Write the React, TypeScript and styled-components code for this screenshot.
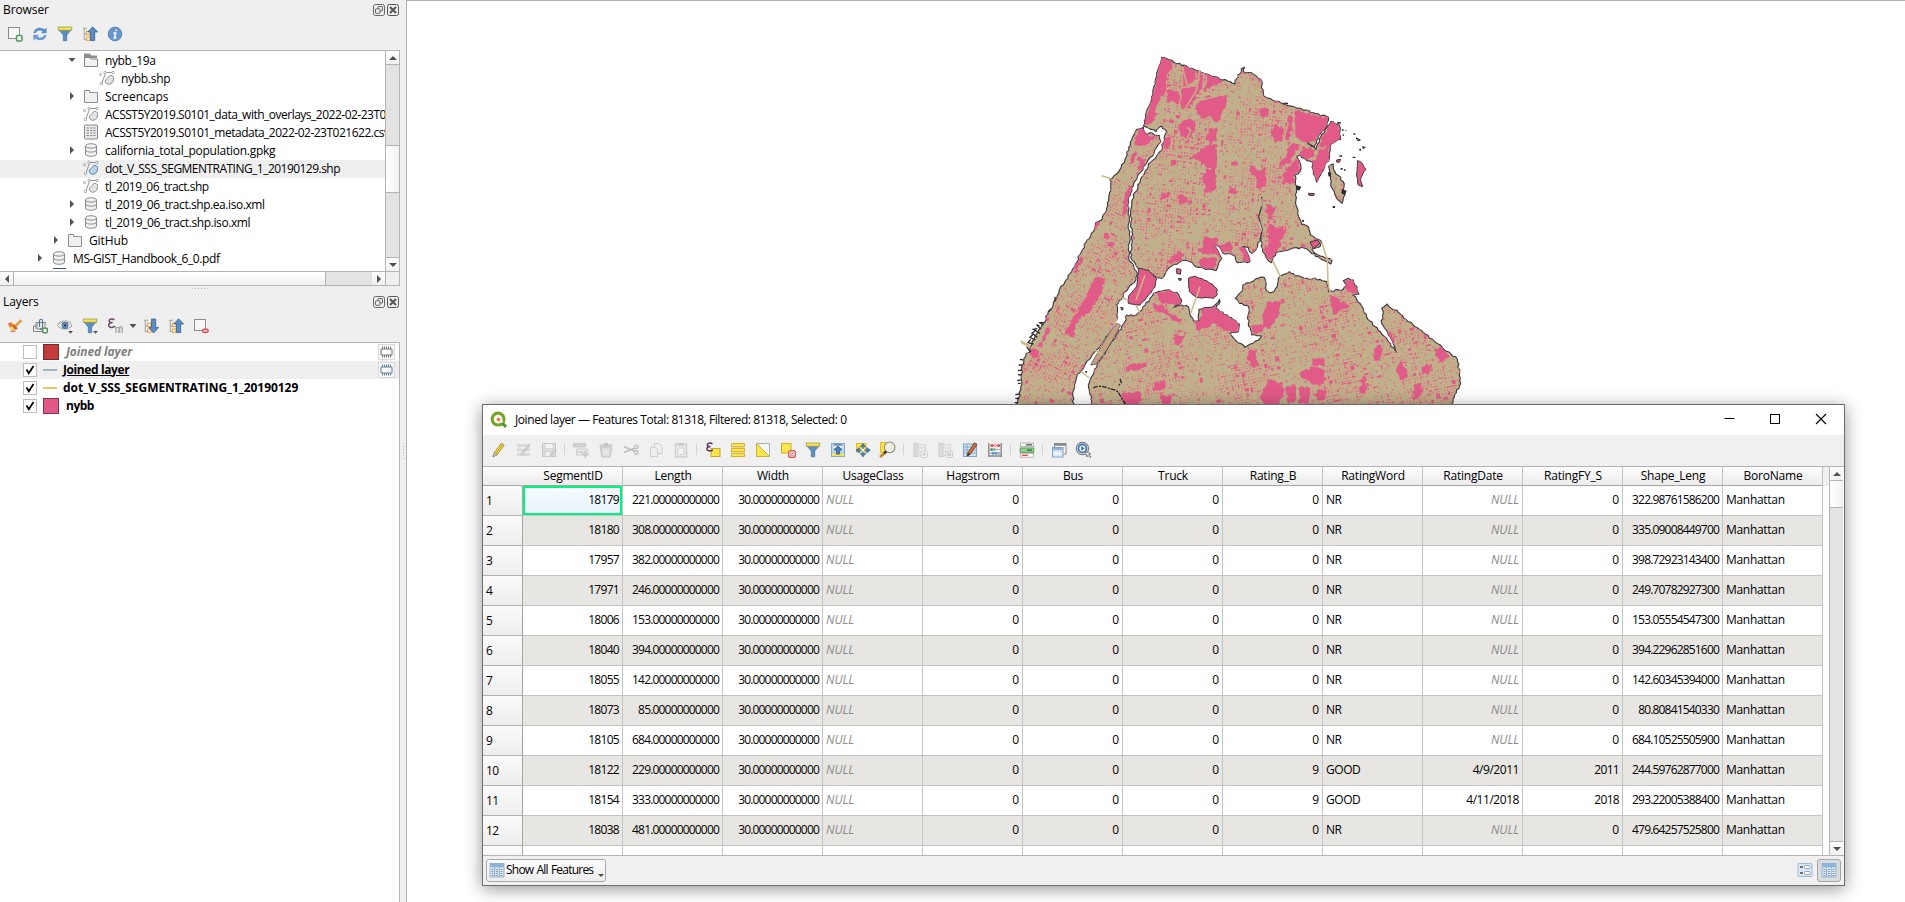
import React from "react";
import styled, { createGlobalStyle, css } from "styled-components";

const Global = createGlobalStyle`
  html, body { margin: 0; padding: 0; height: 902px; overflow: hidden; }
  body { background: #f0f0f0; font-family: "Open Sans", "Noto Sans", sans-serif; font-size: 12px; color: #000; }
  * { box-sizing: border-box; }
  svg { display: block; flex: none; }
`;

/* ---------- shell ---------- */
const Shell = styled.div`
  display: flex;
  width: 1905px;
  height: 902px;
  position: relative;
  overflow: hidden;
  background: #efefef;
`;
const Side = styled.div`
  width: 400px;
  display: flex;
  flex-direction: column;
`;
const Splitter = styled.div`
  width: 6px;
  height: 902px;
  display: flex;
  align-items: center;
  justify-content: center;
`;
const Canvas = styled.div`
  flex: 1;
  border-left: 1px solid #b0b0b0;
  border-top: 1px solid #b0b0b0;
  background: #fff;
  padding: 39px 0 0 593px;
`;
const Dots = styled.div<{ $vertical?: boolean }>`
  ${(p) =>
    p.$vertical
      ? css`width: 1px; height: 17px; background: repeating-linear-gradient(#bbb 0 1px, transparent 1px 3px);`
      : css`height: 1px; width: 17px; background: repeating-linear-gradient(90deg, #bbb 0 1px, transparent 1px 3px);`}
`;
const HSplit = styled.div`
  height: 7px;
  display: flex;
  justify-content: center;
  padding-top: 2px;
`;
const PanelHead = styled.div<{ $h: number }>`
  height: ${(p) => p.$h}px;
  display: flex;
  align-items: center;
  padding: 0 1px 1px 3px;
  letter-spacing: -0.1px;
  svg { margin-left: 2px; }
`;
const Grow = styled.div`
  flex: 1;
`;
const ToolRow = styled.div<{ $h: number; $left: number }>`
  height: ${(p) => p.$h}px;
  padding-left: ${(p) => p.$left}px;
  padding-bottom: 2px;
  display: flex;
  align-items: center;
`;
const Tool = styled.div<{ $w?: number; $off?: boolean }>`
  width: ${(p) => p.$w ?? 25}px;
  display: flex;
  justify-content: center;
  flex: none;
  opacity: ${(p) => (p.$off ? 0.32 : 1)};
  filter: ${(p) => (p.$off ? "grayscale(0.8)" : "none")};
`;
const Sep = styled.div`
  width: 1px;
  height: 11px;
  margin: 0 3px;
  background: #d2d2d2;
  flex: none;
`;

/* ---------- browser tree ---------- */
const TreeBox = styled.div`
  height: 236px;
  width: 400px;
  border-top: 1px solid #b4b4b4;
  border-right: 1px solid #b4b4b4;
  border-bottom: 1px solid #b4b4b4;
  background: #fff;
  display: flex;
  flex-direction: column;
`;
const TreeMid = styled.div`
  display: flex;
  height: 220px;
`;
const TreeRows = styled.div`
  width: 385px;
  padding-top: 1px;
  overflow: hidden;
`;
const TreeRow = styled.div<{ $indent: number; $sel?: boolean }>`
  height: 18px;
  padding-left: ${(p) => p.$indent}px;
  padding-bottom: 2px;
  display: flex;
  align-items: center;
  white-space: nowrap;
  background: ${(p) => (p.$sel ? "#efefef" : "transparent")};
`;
const Twist = styled.div`
  width: 20px;
  padding-left: 5px;
  flex: none;
`;
const TreeName = styled.span<{ $ls: number }>`
  margin-left: 6px;
  letter-spacing: ${(p) => p.$ls}px;
`;
const VBar = styled.div`
  width: 14px;
  border-left: 1px solid #b4b4b4;
  background: #e3e3e3;
  display: flex;
  flex-direction: column;
  flex: none;
`;
const Btn = styled.div<{ $w?: number; $h?: number }>`
  width: ${(p) => (p.$w ? p.$w + "px" : "auto")};
  height: ${(p) => (p.$h ? p.$h + "px" : "auto")};
  display: flex;
  align-items: center;
  justify-content: center;
  background: linear-gradient(#fdfdfd, #f0f0f0);
  flex: none;
`;
const VThumb = styled.div<{ $top: number; $h: number }>`
  margin-top: ${(p) => p.$top}px;
  height: ${(p) => p.$h}px;
  border-top: 1px solid #b4b4b4;
  border-bottom: 1px solid #b4b4b4;
  background: linear-gradient(90deg, #fff, #f2f2f2);
`;
const BarLine = styled.div`
  height: 1px;
  background: #b4b4b4;
`;
const HBar = styled.div`
  height: 14px;
  border-top: 1px solid #b4b4b4;
  display: flex;
  background: #e3e3e3;
`;
const HThumb = styled.div`
  width: 313px;
  border-left: 1px solid #b4b4b4;
  border-right: 1px solid #b4b4b4;
  background: linear-gradient(#fff, #f0f0f0);
`;
const Corner = styled.div`
  width: 14px;
  background: #efefef;
  border-left: 1px solid #b4b4b4;
`;
const Peek = styled.div`
  width: 13px;
  height: 1px;
  margin-left: 53px;
  background: #3d5578;
`;

/* ---------- layers ---------- */
const LayerBox = styled.div`
  flex: 1;
  border-top: 1px solid #b4b4b4;
  border-right: 1px solid #b4b4b4;
  background: #fff;
`;
const LayerRow = styled.div<{ $sel?: boolean }>`
  height: 18px;
  padding: 0 4px 0 23px;
  display: flex;
  align-items: center;
  background: ${(p) => (p.$sel ? "#efefef" : "transparent")};
  font-weight: 700;
`;
const Check = styled.div`
  width: 14px;
  height: 14px;
  border: 1px solid #bdbdbd;
  background: #fff;
  margin-right: 6px;
`;
const Swatch = styled.div<{ $c: string; $line?: boolean }>`
  width: ${(p) => (p.$line ? 14 : 16)}px;
  height: ${(p) => (p.$line ? 2 : 16)}px;
  background: ${(p) => p.$c};
  border: ${(p) => (p.$line ? "none" : "1px solid rgba(60,30,40,.6)")};
  margin-right: ${(p) => (p.$line ? 6 : 7)}px;
`;
const LayerName = styled.span<{ $off?: boolean; $u?: boolean; $ls: number }>`
  flex: 1;
  padding-bottom: 2px;
  letter-spacing: ${(p) => p.$ls}px;
  color: ${(p) => (p.$off ? "#7f7f7f" : "#000")};
  font-style: ${(p) => (p.$off ? "italic" : "normal")};
  text-decoration: ${(p) => (p.$u ? "underline" : "none")};
`;
const MemBox = styled.div`
  width: 17px;
  height: 16px;
  border: 1px solid #dadada;
  background: #f7f7f7;
  display: flex;
  align-items: center;
  justify-content: center;
`;

/* ---------- attribute table window ---------- */
const Win = styled.div`
  position: absolute;
  left: 482px;
  top: 404px;
  width: 1363px;
  height: 482px;
  border: 1px solid #6e6e6e;
  background: #f0f0f0;
  box-shadow: 0 3px 16px rgba(0, 0, 0, 0.42);
  display: flex;
  flex-direction: column;
`;
const TitleBar = styled.div`
  height: 30px;
  background: #fff;
  display: flex;
  align-items: center;
  padding: 0 17px 2px 7px;
`;
const TitleText = styled.div`
  margin-left: 8px;
  flex: 1;
  letter-spacing: -0.42px;
`;
const WinBtns = styled.div`
  display: flex;
  gap: 34px;
`;
const GridBox = styled.div`
  display: flex;
  height: 390px;
  border-top: 1px solid #b4b4b4;
  border-bottom: 1px solid #b4b4b4;
  background: #fff;
`;
const Table = styled.div`
  display: grid;
  grid-template-columns: 40px repeat(13, 100px);
  grid-template-rows: 19px repeat(13, 30px);
  width: 1340px;
  overflow: hidden;
`;
const HeadCell = styled.div<{ $first?: boolean }>`
  border-right: 1px solid ${(p) => (p.$first ? "transparent" : "#c4c4c4")};
  border-bottom: 1px solid #a6a6a6;
  background: linear-gradient(#fdfdfd, #ececec);
  text-align: center;
  line-height: 18px;
  padding-left: 1px;
  letter-spacing: -0.22px;
`;
const RowHead = styled.div`
  border-right: 1px solid #a6a6a6;
  border-bottom: 1px solid #b0b0b0;
  background: linear-gradient(#fbfbfb, #ededed);
  padding-left: 3px;
  line-height: 29px;
  letter-spacing: -0.5px;
`;
const Cell = styled.div<{ $alt?: boolean; $left?: boolean; $nul?: boolean; $cur?: boolean; $ls?: number }>`
  border-right: 1px solid #c4c4c4;
  border-bottom: 1px solid #c4c4c4;
  background: ${(p) => (p.$alt ? "#e8e6e2" : "#fff")};
  text-align: ${(p) => (p.$left ? "left" : "right")};
  padding: 0 3px;
  line-height: 27px;
  white-space: nowrap;
  color: ${(p) => (p.$nul ? "#8a8a8a" : "#000")};
  font-style: ${(p) => (p.$nul ? "italic" : "normal")};
  letter-spacing: ${(p) => p.$ls ?? 0}px;
  ${(p) =>
    p.$cur &&
    css`
      background: linear-gradient(#f5fafe, #e9f3fc);
      box-shadow: inset 0 0 0 2px #00f57f;
    `}
`;
const Filler = styled.div`
  width: 6px;
  height: 19px;
  background: #f0f0f0;
`;
const Footer = styled.div`
  flex: 1;
  display: flex;
  align-items: center;
  justify-content: space-between;
  padding: 0 3px 1px;
`;
const ShowAll = styled.div`
  width: 120px;
  height: 23px;
  border: 1px solid #a9a9a9;
  border-radius: 3px;
  background: linear-gradient(#fdfdfd, #ededed);
  display: flex;
  align-items: center;
  padding-left: 2px;
`;
const ShowText = styled.span`
  margin-left: 1px;
  width: 90px;
  padding-bottom: 1px;
  white-space: nowrap;
  letter-spacing: -0.78px;
  word-spacing: 0.8px;
`;
const Caret = styled.div`
  align-self: flex-end;
  padding-bottom: 3px;
  margin-left: 2px;
`;
const FootRight = styled.div`
  display: flex;
  align-items: center;
  gap: 4px;
`;
const Pressed = styled.div`
  width: 24px;
  height: 23px;
  border: 1px solid #a4a4a4;
  border-radius: 3px;
  background: #dcdcdc;
  display: flex;
  align-items: center;
  justify-content: center;
`;

/* ---------- icons ---------- */
const I = ({ children, s = 16 }: { children: React.ReactNode; s?: number }) => (
  <svg width={s} height={s} viewBox="0 0 16 16" fill="none">
    {children}
  </svg>
);
const Arrow = ({ d }: { d: "u" | "d" | "l" | "r" | "o" }) => {
  const path = {
    u: "M0 6L4 2L8 6Z",
    d: "M0 2L4 6L8 2Z",
    l: "M6 0L2 4L6 8Z",
    r: "M2 0L6 4L2 8Z",
    o: "M0.5 2L4 6L7.5 2Z",
  }[d];
  return (
    <svg width="8" height="8" viewBox="0 0 8 8">
      <path d={path} fill="#505050" />
    </svg>
  );
};
const FloatIcon = () => (
  <svg width="12" height="12" viewBox="0 0 12 12" fill="none" stroke="#666">
    <rect x="0.5" y="0.5" width="11" height="11" rx="2" />
    <rect x="5" y="2.5" width="4.5" height="4.5" rx=".5" />
    <rect x="2.5" y="4.8" width="4.5" height="4.5" rx=".5" fill="#efefef" />
  </svg>
);
const CloseIcon = () => (
  <svg width="12" height="12" viewBox="0 0 12 12" fill="none" stroke="#555">
    <rect x="0.5" y="0.5" width="11" height="11" rx="2" />
    <path d="M3 3L9 9M9 3L3 9" strokeWidth="2" />
  </svg>
);
const AddLayer = () => (
  <I>
    <rect x="1.5" y="1.5" width="11" height="11" stroke="#8c8c8c" fill="#f6f6f6" />
    <rect x="9.5" y="9.5" width="5.5" height="5.5" rx="1.5" fill="#fff" stroke="#4f9658" strokeWidth="1.6" />
  </I>
);
const Refresh = () => (
  <I>
    <path d="M1.5 7C2 3.5 5 1.8 8 1.8C10 1.8 11.3 2.6 12.3 3.5L14.6 1.5V7.3H8.8L10.6 5.4C9.8 4.7 8.9 4.4 7.8 4.5C5.5 4.6 4.4 5.7 3.8 7Z" fill="#5b8fc7" />
    <path d="M14.5 9C14 12.5 11 14.2 8 14.2C6 14.2 4.7 13.4 3.7 12.5L1.4 14.5V8.7H7.2L5.4 10.6C6.2 11.3 7.1 11.6 8.2 11.5C10.5 11.4 11.6 10.3 12.2 9Z" fill="#6b9bd0" />
  </I>
);
const Funnel = ({ caret }: { caret?: boolean }) => (
  <I>
    <path d="M1.5 3.5L6.3 9V14.8H9.7V9L14.5 3.5Z" fill="#5e8fc3" stroke="#44709f" strokeWidth=".7" />
    <rect x="1.2" y="1" width="13.6" height="3.2" fill="#fbe04a" stroke="#8b9a52" strokeWidth=".7" />
    {caret && <path d="M11 13H16L13.5 15.8Z" fill="#505050" />}
  </I>
);
const TreeArrow = ({ down }: { down?: boolean }) => (
  <I>
    <path d="M1 2.2H5M2.3 2V13.5H5M2.3 8H5" stroke="#a5a5a5" strokeWidth="1.1" />
    <rect x="4.6" y="5.3" width="3.3" height="3.3" stroke="#f09a28" fill="#fff" />
    <rect x="4.6" y="11" width="3.3" height="3.3" stroke="#f09a28" fill="#fff" />
    {down ? (
      <path d="M8.5 1H12.7V9.5H15.6L10.6 15L5.8 9.5H8.5Z" fill="#5b8cc2" stroke="#355f90" strokeWidth=".8" />
    ) : (
      <path d="M8.5 14.6H12.7V6H15.6L10.6 .8L5.8 6H8.5Z" fill="#5b8cc2" stroke="#355f90" strokeWidth=".8" />
    )}
  </I>
);
const Info = () => (
  <I>
    <circle cx="8" cy="8" r="6.8" fill="#6a97cb" stroke="#5380b4" />
    <path d="M8.3 4.3H10M6.4 7H8.7L7.4 12H9.4" stroke="#fff" strokeWidth="1.5" />
  </I>
);
const FolderIcon = ({ open }: { open?: boolean }) => (
  <I>
    {open ? (
      <>
        <path d="M1 6V1.5H6.5L8.5 3.5H14V6Z" fill="#8f8f8f" />
        <path d="M1.5 5.5H6.5L8 7H14.5V14.5H1.5Z" fill="#f2f2f2" stroke="#858585" />
      </>
    ) : (
      <path d="M1.5 2.5H6.5V4.5H14.5V14.5H1.5Z" fill="#f0f0f0" stroke="#8f8f8f" />
    )}
  </I>
);
const VectorIcon = ({ blue }: { blue?: boolean }) => (
  <I>
    <path d="M2.8 13.5L6.2 4M6 2.5H14" stroke="#8f9499" />
    <circle cx="1.6" cy="4.6" r="1.1" stroke="#8f9499" strokeWidth=".8" />
    <circle cx="6" cy="2.3" r="1.2" stroke="#8f9499" strokeWidth=".8" fill="#fff" />
    <circle cx="14" cy="2.5" r="1.2" stroke="#8f9499" strokeWidth=".8" fill="#fff" />
    <circle cx="2.4" cy="13.6" r="1.2" stroke="#8f9499" strokeWidth=".8" fill="#fff" />
    <path d="M6.5 12C5.5 9.5 9 8.5 10 6.5C11 4.5 14.8 5.2 14.6 8.5C14.4 12.5 12 14.4 9.6 14.2C8 14 7 13.4 6.5 12Z" fill={blue ? "#b9d3e8" : "#e3e3e3"} stroke={blue ? "#4f7ba3" : "#868686"} />
  </I>
);
const SheetIcon = () => (
  <I>
    <rect x="1.5" y="1" width="13" height="14" rx="1" fill="#e9e9e9" stroke="#8a8a8a" />
    <path d="M3.5 4H6M7.2 4H9.4M10.4 4H12.6M3.5 6.5H6M7.2 6.5H9.4M10.4 6.5H12.6M3.5 9H6M7.2 9H9.4M10.4 9H12.6M3.5 11.5H6M7.2 11.5H9.4M10.4 11.5H12.6" stroke="#8a8a8a" strokeWidth="1.1" />
  </I>
);
const DbIcon = () => (
  <I>
    <path d="M2.5 4C2.5 1 13.5 1 13.5 4V12C13.5 15 2.5 15 2.5 12Z" fill="#f2f2f2" stroke="#8c8c8c" />
    <path d="M2.5 4C2.5 6.8 13.5 6.8 13.5 4M2.5 8C2.5 10.8 13.5 10.8 13.5 8" stroke="#8c8c8c" />
  </I>
);
const BrushIcon = () => (
  <I>
    <path d="M1 6L5 4L9 8L7.5 12.5L4 12Z" fill="#f3d34c" />
    <path d="M1 5.5L4 4.3L5.5 7.5L3 9.5Z" fill="#e36b4c" />
    <path d="M3 13L7.5 12L9 13.5L4.5 14.5Z" fill="#de8a70" />
    <path d="M4.6 7.6L8.6 12L10.8 10.2L6.8 5.9Z" fill="#cf5a30" />
    <path d="M8.2 8.2L14.5 2.2" stroke="#dd9a3c" strokeWidth="2.4" />
  </I>
);
const GroupIcon = () => (
  <I>
    <path d="M1.5 13.5H10M1.5 13.5V8H4M4 11V4.5H6.5M12.5 9V4.5H14" stroke="#888" />
    <path d="M5 4.5H13V11H5Z" stroke="#888" fill="#eee" />
    <path d="M7.5 9V3C7.5 .7 10.5 .7 10.5 3V10C10.5 12 8.5 12 8.5 10" stroke="#4b7298" strokeWidth="1.1" />
    <rect x="10.7" y="10.2" width="4.6" height="4.6" rx="1" fill="#fff" stroke="#4f9658" strokeWidth="1.6" />
  </I>
);
const EyeIcon = () => (
  <I>
    <path d="M.5 7.5C3.5 3 12 2.5 15 8C11 12 4 12 .5 7.5Z" fill="#f5f5f5" stroke="#999" />
    <path d="M1 5.5C4 2 11 1.5 14.5 5" stroke="#aaa" strokeWidth=".8" />
    <circle cx="8" cy="7.4" r="3.1" fill="#6f97c0" stroke="#4d6f93" />
    <circle cx="8" cy="7.4" r="1.2" fill="#22364d" />
    <path d="M11 13H16L13.5 15.8Z" fill="#505050" />
  </I>
);
const EpsIcon = () => (
  <I>
    <path d="M7.5 1.8C5 0 1.8 1.2 2.2 3.2C2.4 4.6 4.2 4.8 5.6 4.6C3.2 4.6 1.3 5.6 1.7 7.6C2.2 9.8 5.8 10 8 8.2" stroke="#6a4a6c" strokeWidth="1.5" />
    <path d="M8.8 15V9.5H12V15M12.5 15V9.8C12.8 8 15.4 8.4 15.3 10.5V15" stroke="#aaa" strokeWidth="1.2" fill="#e0e0e0" />
  </I>
);
const RemoveIcon = () => (
  <I>
    <rect x="1.5" y="1.5" width="11" height="11" stroke="#8c8c8c" fill="#f6f6f6" />
    <rect x="9" y="10.5" width="6.8" height="4.6" rx="2" fill="#e04848" />
    <path d="M10.5 12.8H14.3" stroke="#fff" strokeWidth="1.3" />
  </I>
);
const ChipIcon = ({ c }: { c: string }) => (
  <svg width="13" height="12" viewBox="0 0 13 12" fill="none" stroke={c}>
    <path d="M2.5 0.5V3M4.5 0.5V3M6.5 0.5V3M8.5 0.5V3M10.5 0.5V3M2.5 9V11.5M4.5 9V11.5M6.5 9V11.5M8.5 9V11.5M10.5 9V11.5" />
    <rect x="1" y="3" width="11" height="6" rx="1" fill="#fff" strokeWidth="1.1" />
  </svg>
);
const Tick = () => (
  <svg width="12" height="12" viewBox="0 0 12 12" fill="none">
    <path d="M2.5 5.5L4.8 9.3L9.5 2" stroke="#000" strokeWidth="1.7" />
  </svg>
);
const QLogo = () => (
  <I s={17}>
    <circle cx="7.6" cy="7.6" r="5.6" stroke="#76a52c" strokeWidth="3" />
    <path d="M8.5 8L15 15" stroke="#5d9130" strokeWidth="3" />
    <path d="M7 6.8L11 7L12.5 10.5L10 11.5L7 9.5Z" fill="#f0f0e0" />
    <circle cx="7.9" cy="7.9" r="1.7" fill="#ef7a30" />
  </I>
);
const Pencil = () => (
  <I>
    <path d="M2 14.8L3.4 10.5L10.4 1.2L13.2 3.2L6.3 12.6Z" fill="#f0d446" stroke="#9a8a3a" strokeWidth=".8" />
    <path d="M2 14.8L3.4 10.5L6.3 12.6Z" fill="#d8d8c8" stroke="#777" strokeWidth=".7" />
    <path d="M4.8 11.5L11.8 2.2" stroke="#b89f2e" strokeWidth=".8" />
  </I>
);
const MultiEdit = () => (
  <I>
    <path d="M1 3.5H14M1 8H14M1 12.5H14" stroke="#a8b090" strokeWidth="3" />
    <path d="M5 13L13.5 2.5" stroke="#777" strokeWidth="2.6" />
  </I>
);
const Save = () => (
  <I>
    <path d="M1.5 2.5C1.5 1.5 2 1.5 3 1.5H14.5V14.5H1.5Z" fill="#bbb" stroke="#666" />
    <rect x="4" y="1.8" width="8" height="5" fill="#fff" stroke="#777" strokeWidth=".7" />
    <rect x="4" y="9.5" width="7" height="5" fill="#eee" stroke="#777" strokeWidth=".7" />
    <path d="M9 14L15 7" stroke="#777" strokeWidth="2" />
  </I>
);
const AddRow = () => (
  <I>
    <path d="M.5 1.5H12.5V5H.5Z" fill="#999" stroke="#777" />
    <path d="M3.5 7H14.5V10H3.5ZM3.5 10H10V13H3.5Z" fill="#ddd" stroke="#888" />
    <path d="M12.5 9V16M9 12.5H16" stroke="#777" strokeWidth="2" />
  </I>
);
const Trash = () => (
  <I>
    <path d="M2.5 5H13.5L12.5 15H3.5Z" fill="#c99" stroke="#866" />
    <path d="M1.5 3.5H14.5M6 2H10" stroke="#866" strokeWidth="1.8" />
    <path d="M6 6.5V13.5M8 6.5V13.5M10 6.5V13.5" stroke="#fff" />
  </I>
);
const Cut = () => (
  <I>
    <path d="M1 4.5L12 9.5M1 10.5L12 6" stroke="#555" strokeWidth="1.4" />
    <circle cx="13.3" cy="5" r="1.8" stroke="#555" strokeWidth="1.3" />
    <circle cx="13.3" cy="10.5" r="1.8" stroke="#555" strokeWidth="1.3" />
  </I>
);
const Copy = () => (
  <I>
    <path d="M6.5 1.5H11L14 4.5V11.5H6.5Z" fill="#eee" stroke="#888" />
    <path d="M2.5 5H7L9.5 7.5V14.5H2.5Z" fill="#eee" stroke="#888" />
  </I>
);
const Paste = () => (
  <I>
    <rect x="2.5" y="2" width="11" height="13" fill="#ddd" stroke="#888" strokeWidth="1.4" />
    <rect x="5.5" y=".8" width="5" height="3" fill="#777" />
    <path d="M5 6H11V12.5H5Z" fill="#fff" stroke="#999" />
  </I>
);
const SelExpr = () => (
  <I>
    <rect x="6" y="6.5" width="9" height="8" fill="#fbe64d" stroke="#c9a92a" />
    <path d="M7.5 1.8C5 .2 2 1.2 2.4 3C2.6 4.4 4 4.8 5.4 4.6C3.2 4.6 1.6 5.4 2 7.2C2.5 9.2 5.8 9.4 7.8 7.8" stroke="#54305a" strokeWidth="1.5" />
  </I>
);
const SelAll = () => (
  <I>
    <path d="M1.5 1.5H14.5V4.8H1.5ZM1.5 6.4H14.5V9.7H1.5ZM1.5 11.3H14.5V14.6H1.5Z" fill="#fbe64d" stroke="#d0ae2c" />
  </I>
);
const Invert = () => (
  <I>
    <rect x="1.5" y="1.5" width="13" height="13" fill="#f5f5f5" stroke="#b0b0b0" />
    <path d="M1.5 1.5V14.5H14.5Z" fill="#fbe64d" stroke="#cdb033" />
  </I>
);
const Desel = () => (
  <I>
    <rect x="1.5" y="1.5" width="9.5" height="9.5" fill="#fbe64d" stroke="#d0ae2c" />
    <rect x="8.6" y="8.6" width="6.8" height="6.8" rx="2" fill="#fff" stroke="#d9534f" strokeWidth="1.2" />
    <path d="M9.5 14.5L14.5 9.5M9.5 12L12 9.5M12 14.5L14.5 12" stroke="#d9534f" strokeWidth="1" />
  </I>
);
const MoveTop = () => (
  <I>
    <rect x="1.5" y="1.5" width="13" height="13" fill="#b9d3ea" stroke="#86a9c9" />
    <path d="M2 12.8H14" stroke="#f5e25a" strokeWidth="2.6" />
    <path d="M3 5H13M3 8H13" stroke="#fff" />
    <path d="M4 2.8H12M8 4L12 8H9.6V12H6.4V8H4Z" fill="#4f7fb5" stroke="#345f90" strokeWidth=".9" />
  </I>
);
const Pan = () => (
  <I>
    <rect x="1.5" y="1.5" width="9.5" height="8.5" fill="#fbe64d" stroke="#d6ba3c" />
    <path d="M8 1.5L10.5 4.8H5.5ZM8 14.8L10.5 11.5H5.5ZM1 8.2L4.3 5.7V10.7ZM15.2 8.2L11.8 5.7V10.7Z" fill="#4e7eb4" stroke="#3a6498" strokeWidth=".8" />
    <path d="M8 4.5V12M4 8.2H12" stroke="#4e7eb4" strokeWidth="1.5" />
    <rect x="6.7" y="6.9" width="2.6" height="2.6" fill="#fff" />
  </I>
);
const ZoomSel = () => (
  <I s={17}>
    <rect x="1.5" y="1.5" width="9" height="9" fill="#fbe64d" stroke="#d6ba3c" />
    <path d="M1 15L6.5 10.2" stroke="#ba8b20" strokeWidth="2.6" />
    <circle cx="10" cy="6" r="5" fill="#f1efe4" stroke="#8a8878" />
    <path d="M4.8 11.5L6.8 9.8" stroke="#222" strokeWidth="1.8" />
  </I>
);
const NewCol = ({ del }: { del?: boolean }) => (
  <I>
    <path d="M2 1.5H6.5V14.5H2Z" fill="#aab49a" stroke="#888" />
    <path d="M6.5 2.5H13.5V13.5H6.5ZM6.5 6H13.5M6.5 9.5H13.5" stroke="#aaa" fill="#e6e6e6" />
    <rect x="9" y="9" width="6.5" height="6.5" rx="1.5" fill="#fff" stroke={del ? "#a66" : "#888"} />
    <path d={del ? "M10.5 10.5L14 14M14 10.5L10.5 14" : "M12.2 10.3V14M10.4 12.2H14"} stroke={del ? "#a66" : "#777"} strokeWidth="1.3" />
  </I>
);
const EditTable = () => (
  <I>
    <rect x="1.5" y="2" width="13" height="12.5" fill="#cfe0f0" stroke="#7fa5c9" />
    <path d="M2 5H14M2 8H14M2 11H14M5 2V14" stroke="#7fa5c9" strokeWidth=".9" />
    <path d="M5.2 14L6 10.8L12.3 .8L15 2.4L8.4 12.2Z" fill="#d9703c" stroke="#6f4128" strokeWidth=".9" />
    <path d="M5.2 14L6 10.8L8.4 12.2Z" fill="#3a2a20" />
  </I>
);
const Abacus = () => (
  <I>
    <path d="M1.8 1V15M14.2 1V15M1 14H15" stroke="#8a8a8a" strokeWidth="1.4" />
    <path d="M2 3.5H14M2 7.5H14M2 11.2H14" stroke="#aaa" />
    <circle cx="5" cy="3.4" r="1.5" fill="#d9484e" />
    <circle cx="8.2" cy="3.4" r="1.3" fill="#fff" stroke="#d9484e" strokeWidth=".7" />
    <circle cx="11.6" cy="3.4" r="1.5" fill="#d9484e" />
    <circle cx="4.6" cy="7.5" r="1.5" fill="#56a06a" />
    <circle cx="7.4" cy="7.5" r="1.5" fill="#7fb98e" />
    <circle cx="6" cy="11.2" r="1.5" fill="#5f93c6" />
    <circle cx="9" cy="11.2" r="1.5" fill="#5f93c6" />
    <circle cx="11.8" cy="11.2" r="1.5" fill="#8fb3d6" />
  </I>
);
const CondFmt = () => (
  <I>
    <rect x="1.5" y="1" width="13" height="3.6" fill="#f7f7f7" stroke="#b0b0b0" />
    <path d="M7 2.8H13" stroke="#555" strokeWidth="1.3" />
    <rect x="1.2" y="6" width="13.6" height="4.4" fill="#8fce8f" stroke="#5ea463" />
    <path d="M8 8.2H13" stroke="#2f7a3c" strokeWidth="1.5" />
    <rect x="1.5" y="11.6" width="13" height="3.6" fill="#fff" stroke="#c4b0b0" />
    <path d="M3 13.4H9" stroke="#d9484e" strokeWidth="1.3" />
  </I>
);
const Dock = () => (
  <I>
    <rect x="3.5" y="1.5" width="11.5" height="10.5" fill="#f7f7f7" stroke="#8a8a8a" />
    <path d="M3.5 2.8H15" stroke="#8a8a8a" strokeWidth="2" />
    <rect x="1.5" y="5.5" width="10.5" height="9.5" fill="#cfe0f0" stroke="#7fa5c9" />
    <path d="M1.5 7H12" stroke="#8fb3d6" strokeWidth="2.4" />
    <path d="M2 11.5H11.5M5 8V14.5M8.5 8V14.5" stroke="#fff" />
  </I>
);
const ActionIcon = () => (
  <I s={17}>
    <circle cx="7" cy="7" r="5.8" fill="#fff" stroke="#777" />
    <circle cx="7" cy="7" r="3.8" fill="#fff" stroke="#4e82ba" strokeWidth="2" />
    <path d="M5.8 4.8L9.2 7L5.8 9.2Z" fill="#3c6ea5" />
    <path d="M9.6 9.6L15 12L12.8 12.6L15 15L14 15.6L12 13.4L11.2 15Z" fill="#fff" stroke="#777" strokeWidth=".9" />
  </I>
);
const TableIcon = () => (
  <I>
    <rect x="1" y="1.5" width="14" height="13.5" fill="#dbe8f4" stroke="#8fb3d6" />
    <rect x="1.2" y="1.5" width="13.6" height="3.8" fill="#8db4dc" />
    <path d="M5.5 2V15M10.3 2V15" stroke="#8fb3d6" />
    <path d="M2.5 7.5H4.5M6.8 7.5H9M11.5 7.5H13.5M2.5 9.5H4.5M6.8 9.5H9M11.5 9.5H13.5M2.5 11.5H4.5M6.8 11.5H9M11.5 11.5H13.5M2.5 13.5H4.5M6.8 13.5H9M11.5 13.5H13.5" stroke="#8a9bac" />
  </I>
);
const FormIcon = () => (
  <I>
    <rect x="1" y="1.5" width="14" height="13" rx="1" fill="#dbe8f4" stroke="#9dbbd8" />
    <path d="M3 5H6M3 11H6" stroke="#4a4a4a" strokeWidth="1.5" />
    <rect x="7.5" y="3.5" width="5.5" height="3" rx="1" fill="#fff" stroke="#8fa9c2" />
    <rect x="7.5" y="9.5" width="5.5" height="3" rx="1" fill="#fff" stroke="#8fa9c2" />
  </I>
);

/* ---------- map ---------- */
const makeRandom = (seed: number) => () => {
  seed = (seed * 1664525 + 1013904223) % 4294967296;
  return seed / 4294967296;
};
const toPoints = (s: string) => s.trim().split(/\s+/).map((p) => p.split(",").map(Number));

// Splits every edge into short steps with small offsets, so the shore reads as a coastline.
const coast = (s: string, amp = 3, seed = 7) => {
  const rnd = makeRandom(seed);
  const pts = toPoints(s);
  let d = "";
  pts.forEach((a, i) => {
    const b = pts[(i + 1) % pts.length];
    const len = Math.hypot(b[0] - a[0], b[1] - a[1]);
    const n = Math.max(1, Math.round(len / 8));
    for (let k = 0; k < n; k++) {
      const j = k === 0 ? 0 : (rnd() - 0.5) * amp;
      const x = a[0] + ((b[0] - a[0]) * k) / n - ((b[1] - a[1]) / len) * j;
      const y = a[1] + ((b[1] - a[1]) * k) / n + ((b[0] - a[0]) / len) * j;
      d += (d ? "L" : "M") + x.toFixed(1) + " " + y.toFixed(1);
    }
  });
  return d + "Z";
};

// Blocks between streets: small rectangles on a loose grid, thicker in some districts.
const blocks = (x: number, y: number, w: number, h: number, sx: number, sy: number, density: number, seed: number, maxW: number, maxH: number) => {
  const rnd = makeRandom(seed);
  let d = "";
  for (let yy = y; yy < y + h; yy += sy)
    for (let xx = x; xx < x + w; xx += sx) {
      const local = density * (0.45 + 1.3 * Math.abs(Math.sin(xx / 83 + seed) * Math.cos(yy / 59 + xx / 140)));
      if (rnd() < local) {
        const bw = 3 + Math.floor(rnd() * rnd() * maxW);
        const bh = 3 + Math.floor(rnd() * rnd() * maxH);
        d += `M${xx.toFixed(0)} ${yy.toFixed(0)}h${bw}v${bh}h-${bw}z`;
      }
    }
  return d;
};

const BRONX =
  "485,52 590,92 705,132 714,104 724,96 724,86 734,82 730,95 745,98 762,104 782,118 790,166 812,176 850,192 985,232 978,262 955,288 943,322 920,302 932,318 948,328 962,290 980,262 992,245 1018,256 1022,298 1000,308 990,320 988,355 975,375 962,405 950,426 940,402 937,366 920,362 900,345 890,350 900,368 900,395 884,405 890,440 888,480 893,520 905,553 925,560 932,585 965,605 960,620 936,628 945,640 970,650 996,662 992,672 960,655 930,635 905,622 870,628 835,635 820,650 815,668 800,655 788,635 783,592 770,625 755,640 745,622 728,620 742,640 750,665 712,668 705,648 668,638 655,618 630,610 650,625 665,655 648,692 595,682 570,665 545,662 515,678 485,715 450,705 415,685 392,652 396,600 392,520 396,480 424,412 452,367 484,332 493,290 500,275 485,258 468,275 430,258 455,170 470,110";
const MANHATTAN =
  "430,262 410,268 395,300 375,360 350,402 330,418 333,450 320,505 305,540 287,548 280,575 262,600 215,695 180,745 165,780 150,810 130,850 105,890 90,930 72,955 65,1000 62,1050 50,1100 222,1100 218,1060 230,1010 260,965 310,905 355,845 350,795 385,745 408,720 410,695 386,655 389,590 384,520 385,480 401,430 436,375 462,340 483,305 478,287 450,278 440,285";
const QUEENS =
  "275,1100 275,1070 265,1035 275,1010 300,960 340,900 365,860 375,845 380,825 400,828 420,815 450,775 470,757 500,750 530,757 545,780 540,792 522,802 545,795 565,800 570,825 580,843 597,843 597,808 625,803 645,795 658,778 660,785 648,805 718,852 715,875 690,880 710,905 735,922 760,910 785,888 755,885 745,850 745,798 718,790 705,775 725,755 728,735 755,725 780,712 792,712 800,752 815,758 832,740 835,715 868,695 885,708 920,715 960,718 980,725 985,755 1030,748 1040,738 1030,722 1045,715 1060,720 1077,762 1058,765 1080,790 1100,830 1145,882 1165,905 1190,937 1170,890 1145,850 1150,820 1145,805 1162,792 1270,878 1372,957 1382,1030 1350,1100";
const RANDALLS = "415,685 445,690 470,715 462,745 435,780 420,795 385,790 385,770 410,740 412,710";
const ROOSEVELT = "350,850 362,856 322,928 288,972 272,975 298,930 332,872";
const RIKERS = "565,715 585,708 620,722 650,745 652,765 640,775 590,772 568,755";
const CITY_ISLAND = "986,380 1000,372 1005,395 1030,425 1035,465 1026,490 1012,478 992,432";
const HART = "1072,362 1085,368 1098,388 1088,402 1082,415 1088,440 1075,435 1070,400";

const PARKS_BRONX = [
  "485,52 516,64 512,90 500,110 498,150 480,180 468,200 466,240 455,250 432,256 455,170 470,110",
  "548,78 586,92 580,130 565,142 550,134",
  "590,94 616,104 608,145 590,150",
  "622,106 668,122 630,146 614,148",
  "545,148 580,140 596,150 585,180 560,208 545,206",
  "620,168 682,164 676,196 662,240 650,248 625,228 605,236 585,206 600,182",
  "535,258 560,240 588,238 584,262 575,290 560,310 540,282",
  "625,268 650,262 650,296 636,312 616,300",
  "575,352 615,318 648,316 650,385 625,384 600,362",
  "616,388 645,386 652,440 634,462 608,428",
  "748,376 765,380 772,390 800,385 796,430 780,458 768,440 772,420 752,398",
  "540,462 578,488 536,494",
  "482,462 512,458 508,468 495,476 484,482",
  "888,212 985,234 975,264 940,304 910,306 880,292",
  "865,226 880,232 876,262 868,302 852,300 858,262",
  "820,252 846,262 850,296 826,310 814,286",
  "868,306 902,312 880,348 866,372 836,376 858,352",
  "905,320 945,330 938,352 922,362 898,345",
  "955,330 990,318 985,366 962,404 950,424 940,400 938,360 950,352",
  "994,246 1018,256 1022,298 990,316 955,326 966,290",
  "886,356 900,366 900,392 884,404 884,428 846,432 850,400 876,376",
  "806,552 862,568 850,592 838,600 842,620 816,660 800,650 790,630 806,620",
  "612,590 650,592 656,616 690,606 700,640 664,636 660,650 632,640 606,644",
  "600,658 648,652 646,690 600,684",
  "500,666 540,632 552,640 546,660 516,672",
  "716,622 740,626 750,664 732,664",
  "690,444 708,450 706,464 688,458",
  "780,206 806,208 802,228 782,230",
  "795,492 826,504 818,524 798,520",
  "500,150 536,156 538,190 500,188",
  "490,300 512,292 508,320 494,326",
  "694,366 714,368 712,378 694,376",
];
const PARKS_MANHATTAN = [
  "414,268 430,266 445,288 470,290 462,300 425,316 402,310",
  "395,346 410,336 402,368 386,372",
  "418,368 440,356 430,390 412,396",
  "384,436 396,440 388,480 376,526 364,528 372,480",
  "288,712 316,714 306,752 272,812 234,838 222,890 196,884 212,846 246,790 268,744",
  "240,650 250,654 228,700 220,694",
  "142,862 150,866 126,922 116,918",
  "90,930 112,930 118,952 100,956",
  "282,548 300,545 290,568 280,570",
  "312,580 326,582 322,600 310,596",
  "326,606 346,612 338,624 324,618",
];
const PARKS_QUEENS = [
  "468,760 500,752 530,757 545,780 534,798 500,790 480,784",
  "580,846 600,843 604,808 646,800 718,852 712,880 676,872 640,850 614,864 590,872",
  "520,884 556,884 536,918",
  "800,786 842,782 836,826 812,866 788,860 790,820",
  "745,934 770,926 768,958 778,976 762,984 742,960",
  "936,958 974,956 974,980 936,974",
  "898,1000 940,980 976,992 972,1032 944,1034 908,1016",
  "990,766 1018,780 1050,800 1030,806 1010,822 998,818",
  "1036,722 1058,720 1074,762 1056,762 1034,744",
  "1152,876 1172,876 1184,906 1172,914 1158,896",
  "1300,930 1320,922 1350,950 1320,966",
  "1200,962 1222,990 1226,1012 1200,1020 1188,990",
  "1264,990 1280,968 1296,978 1290,996 1268,1006",
  "1240,1036 1266,1030 1264,1062 1240,1080",
  "1122,926 1146,922 1140,960 1122,962",
  "805,1018 850,1030 848,1070 832,1100 795,1100 780,1070",
  "858,1040 886,1034 888,1080 864,1092",
  "366,1060 420,1056 428,1080 400,1100 370,1092",
  "482,1066 516,1068 508,1094 486,1090",
  "396,972 440,968 440,980 410,990 378,994 376,980",
  "1086,1010 1098,1012 1096,1060 1080,1056",
  "462,1030 496,1024 494,1046 460,1054",
  "752,858 796,854 786,880 760,878",
  "456,790 484,796 520,824 550,840 540,850 500,826 470,812",
  "900,1040 930,1044 926,1090 896,1090",
  "950,1050 976,1048 974,1080 950,1080",
];

type BoroughProps = { id: string; outline: string; parks: string[]; angle: number; density: number; seed: number; box: number[] };
const Borough = ({ id, outline, parks, angle, density, seed, box }: BoroughProps) => {
  const shape = coast(outline, 6, seed);
  const [x, y, w, h] = [box[0] - 120, box[1] - 120, box[2] + 240, box[3] + 240];
  return (
    <g>
      <clipPath id={id}>
        <path d={shape} />
      </clipPath>
      <path d={shape} fill="#c0b18d" stroke="#3a353e" strokeWidth="3.4" strokeLinejoin="round" />
      <g clipPath={`url(#${id})`}>
        <g transform={`rotate(${angle} ${box[0] + box[2] / 2} ${box[1] + box[3] / 2})`}>
          <path d={blocks(x, y, w, h, 9, 8, density * 1.3, seed + 3, 5, 4)} fill="#d69b79" />
          <path d={blocks(x, y, w, h, 9, 9, density, seed, 8, 5)} fill="#e06c88" />
          <path d={blocks(x, y, w, h, 18, 15, density * 0.75, seed + 9, 17, 13)} fill="#e25a88" />
        </g>
        {parks.map((p) => (
          <path key={p} d={coast(p, 10, seed + p.length)} fill="#e25a88" />
        ))}
      </g>
    </g>
  );
};

const MapView = () => (
  <svg width="480" height="370" viewBox="0 0 1440 1110" fill="none">
    <Borough id="bx" outline={BRONX} parks={PARKS_BRONX} angle={6} density={0.44} seed={11} box={[380, 50, 660, 670]} />
    <Borough id="mn" outline={MANHATTAN} parks={PARKS_MANHATTAN} angle={28} density={0.44} seed={23} box={[0, 250, 500, 860]} />
    <Borough id="qn" outline={QUEENS} parks={PARKS_QUEENS} angle={-12} density={0.42} seed={37} box={[230, 680, 1180, 430]} />
    <path d="M256 1008L318 910L362 842L372 800" stroke="#fff" strokeWidth="18" />
    <path d={coast(ROOSEVELT, 2, 4)} fill="#c6a182" stroke="#3a353e" strokeWidth="2" />
    <Borough id="ci" outline={CITY_ISLAND} parks={[]} angle={10} density={0.3} seed={6} box={[980, 370, 60, 130]} />

    <path d="M548 84L562 138L600 118M600 90L590 150L556 206L585 212L582 240M612 100L606 180L682 160M694 165L655 270L652 460M835 215L865 250L850 300L930 318M880 215L885 300L800 380M560 262L572 270L560 300L545 290" stroke="#c6b089" strokeWidth="4.5" />
    <path d="M785 470V500L776 530L787 570L780 600" stroke="#454045" strokeWidth="4" />
    <path d="M785 476V500M778 545L786 575" stroke="#fff" strokeWidth="2" />

    {[RANDALLS, RIKERS, HART].map((p) => (
      <path key={p} d={coast(p, 4, 3)} fill="#e25a88" stroke="#3a353e" strokeWidth="3" />
    ))}
    <path
      d="M530 686L543 688L541 703L530 700ZM536 715L544 716L543 721L536 720ZM925 460L943 461L941 467L927 466ZM1010 360L1022 358L1018 367L1010 366ZM1068 293L1081 300L1074 303ZM362 802L370 804L366 811ZM1088 320L1096 322L1090 326Z"
      fill="#e25a88"
      stroke="#3a353e"
      strokeWidth="3"
    />
    <path d="M1012 246h10v5h-10zM1026 268h5v4h-5zM1028 283h4v4h-4zM1060 280h6v4h-6zM1078 326h5v6h-5zM1058 350h8v4h-8zM1018 346h8v4h-8zM1022 384h6v5h-6zM1032 388h5v4h-5zM998 498h7v6h-7zM1036 270h3v3h-3zM256 993h5v5h-5zM890 436L904 440L898 452L888 448ZM984 396L994 398L992 412L985 408ZM1026 448L1040 452L1034 466L1024 460ZM906 540h6v5h-6zM850 188h14v5h-14z" fill="#2b282e" />
    <path d="M165 770V785M153 808L145 815M132 848L120 848L130 856M118 858L110 854L122 866M112 866L100 868L120 880M104 874L96 880L112 892M98 884L90 892L106 900M92 898L84 908L100 912M80 920L92 936M70 960L60 958M66 975L56 975M66 990L54 992M64 1005L54 1004M62 1020L52 1022M62 1030L54 1030M60 1062L46 1064M58 1076L46 1075M54 1088L44 1088" stroke="#2b282e" strokeWidth="4" />
    <path d="M280 1044C300 1030 330 1048 345 1050C360 1055 360 1075 380 1095M360 1016L364 1028L356 1036" stroke="#2b282e" strokeWidth="4" strokeDasharray="14 4 6 3" />
    <path d="M305 407L334 416M62 903L92 918M64 908L90 922M818 662L842 712M965 605L982 660L984 725L990 758M600 740L572 820M242 994L268 1014M366 774L385 780M285 930L310 946M408 796L420 818M435 706L408 780" stroke="#cabb88" strokeWidth="4.5" />
    <path d="M930 606L952 600L960 610L940 626Z" fill="#e25a88" stroke="#3a353e" strokeWidth="3" />
  </svg>
);

/* ---------- data ---------- */
type TreeItem = [number, string, React.ReactNode, string, number, boolean?];
const BROWSER: TreeItem[] = [
  [63, "o", <FolderIcon open />, "nybb_19a", -0.4],
  [79, "", <VectorIcon />, "nybb.shp", -0.3],
  [63, "r", <FolderIcon />, "Screencaps", 0],
  [63, "", <VectorIcon />, "ACSST5Y2019.S0101_data_with_overlays_2022-02-23T021622.csv", -0.5],
  [63, "", <SheetIcon />, "ACSST5Y2019.S0101_metadata_2022-02-23T021622.csv", -0.5],
  [63, "r", <DbIcon />, "california_total_population.gpkg", -0.25],
  [63, "", <VectorIcon blue />, "dot_V_SSS_SEGMENTRATING_1_20190129.shp", -0.53, true],
  [63, "", <VectorIcon />, "tl_2019_06_tract.shp", -0.5],
  [63, "r", <DbIcon />, "tl_2019_06_tract.shp.ea.iso.xml", -0.43],
  [63, "r", <DbIcon />, "tl_2019_06_tract.shp.iso.xml", -0.4],
  [47, "r", <FolderIcon />, "GitHub", -0.1],
  [31, "r", <DbIcon />, "MS-GIST_Handbook_6_0.pdf", -0.4],
];
const COLS = ["SegmentID", "Length", "Width", "UsageClass", "Hagstrom", "Bus", "Truck", "Rating_B", "RatingWord", "RatingDate", "RatingFY_S", "Shape_Leng", "BoroName"];
const ROWS: [string, string, string, string, string, string, string][] = [
  ["18179", "221", "0", "NR", "NULL", "0", "322.98761586200"],
  ["18180", "308", "0", "NR", "NULL", "0", "335.09008449700"],
  ["17957", "382", "0", "NR", "NULL", "0", "398.72923143400"],
  ["17971", "246", "0", "NR", "NULL", "0", "249.70782927300"],
  ["18006", "153", "0", "NR", "NULL", "0", "153.05554547300"],
  ["18040", "394", "0", "NR", "NULL", "0", "394.22962851600"],
  ["18055", "142", "0", "NR", "NULL", "0", "142.60345394000"],
  ["18073", "85", "0", "NR", "NULL", "0", "80.80841540330"],
  ["18105", "684", "0", "NR", "NULL", "0", "684.10525505900"],
  ["18122", "229", "9", "GOOD", "4/9/2011", "2011", "244.59762877000"],
  ["18154", "333", "9", "GOOD", "4/11/2018", "2018", "293.22005388400"],
  ["18038", "481", "0", "NR", "NULL", "0", "479.64257525800"],
];

const DIALOG_TOOLS: (React.ReactNode | "sep" | [React.ReactNode])[] = [
  <Pencil />, [<MultiEdit />], [<Save />], "sep",
  [<AddRow />], [<Trash />], [<Cut />], [<Copy />], [<Paste />], "sep",
  <SelExpr />, <SelAll />, <Invert />, <Desel />, <Funnel />, <MoveTop />, <Pan />, <ZoomSel />, "sep",
  [<NewCol />], [<NewCol del />], <EditTable />, <Abacus />, "sep",
  <CondFmt />, "sep", <Dock />, <ActionIcon />,
];

/* Tracking that brings long decimals to their column width. */
const NUM = -0.82;

const Row = ({ r, i }: { r: (typeof ROWS)[number]; i: number }) => {
  const alt = i % 2 === 1;
  return (
    <>
      <RowHead>{i + 1}</RowHead>
      <Cell $alt={alt} $cur={i === 0} $ls={-0.7}>{r[0]}</Cell>
      <Cell $alt={alt} $ls={NUM}>{r[1]}.00000000000</Cell>
      <Cell $alt={alt} $ls={NUM}>30.00000000000</Cell>
      <Cell $alt={alt} $left $nul>NULL</Cell>
      <Cell $alt={alt}>0</Cell>
      <Cell $alt={alt}>0</Cell>
      <Cell $alt={alt}>0</Cell>
      <Cell $alt={alt}>{r[2]}</Cell>
      <Cell $alt={alt} $left $ls={-0.45}>{r[3]}</Cell>
      <Cell $alt={alt} $nul={r[4] === "NULL"} $ls={r[4] === "NULL" ? 0 : -0.45}>{r[4]}</Cell>
      <Cell $alt={alt} $ls={r[5] === "0" ? 0 : -0.7}>{r[5]}</Cell>
      <Cell $alt={alt} $ls={NUM}>{r[6]}</Cell>
      <Cell $alt={alt} $left $ls={-0.3}>Manhattan</Cell>
    </>
  );
};

export default function App() {
  return (
    <Shell>
      <Global />
      <Side>
        <PanelHead $h={20}>
          Browser<Grow /><FloatIcon /><CloseIcon />
        </PanelHead>
        <ToolRow $h={30} $left={2}>
          <Tool><AddLayer /></Tool>
          <Tool><Refresh /></Tool>
          <Tool><Funnel /></Tool>
          <Tool><TreeArrow /></Tool>
          <Tool><Info /></Tool>
        </ToolRow>
        <TreeBox>
          <TreeMid>
            <TreeRows>
              {BROWSER.map(([indent, arrow, icon, name, ls, sel]) => (
                <TreeRow key={name} $indent={indent} $sel={sel}>
                  <Twist>{arrow && <Arrow d={arrow as "o" | "r"} />}</Twist>
                  {icon}
                  <TreeName $ls={ls}>{name}</TreeName>
                </TreeRow>
              ))}
              <Peek />
            </TreeRows>
            <VBar>
              <Btn $h={13}><Arrow d="u" /></Btn>
              <BarLine />
              <VThumb $top={80} $h={48} />
              <Grow />
              <BarLine />
              <Btn $h={13}><Arrow d="d" /></Btn>
            </VBar>
          </TreeMid>
          <HBar>
            <Btn $w={13}><Arrow d="l" /></Btn>
            <HThumb />
            <Grow />
            <Btn $w={13}><Arrow d="r" /></Btn>
            <Corner />
          </HBar>
        </TreeBox>
        <HSplit><Dots /></HSplit>
        <PanelHead $h={18}>
          Layers<Grow /><FloatIcon /><CloseIcon />
        </PanelHead>
        <ToolRow $h={31} $left={2}>
          <Tool><BrushIcon /></Tool>
          <Tool><GroupIcon /></Tool>
          <Tool><EyeIcon /></Tool>
          <Tool><Funnel caret /></Tool>
          <Tool><EpsIcon /></Tool>
          <Tool $w={11}><Arrow d="o" /></Tool>
          <Tool><TreeArrow down /></Tool>
          <Tool><TreeArrow /></Tool>
          <Tool><RemoveIcon /></Tool>
        </ToolRow>
        <LayerBox>
          <LayerRow>
            <Check /><Swatch $c="#c43c39" />
            <LayerName $off $ls={-0.1}>Joined layer</LayerName>
            <MemBox><ChipIcon c="#777" /></MemBox>
          </LayerRow>
          <LayerRow $sel>
            <Check><Tick /></Check><Swatch $line $c="#9fb4bf" />
            <LayerName $u $ls={-0.4}>Joined layer</LayerName>
            <MemBox><ChipIcon c="#5f8198" /></MemBox>
          </LayerRow>
          <LayerRow>
            <Check><Tick /></Check><Swatch $line $c="#edc45e" />
            <LayerName $ls={-0.04}>dot_V_SSS_SEGMENTRATING_1_20190129</LayerName>
          </LayerRow>
          <LayerRow>
            <Check><Tick /></Check><Swatch $c="#e15989" />
            <LayerName $ls={-0.5}>nybb</LayerName>
          </LayerRow>
        </LayerBox>
      </Side>
      <Splitter><Dots $vertical /></Splitter>
      <Canvas>
        <MapView />
      </Canvas>

      <Win>
        <TitleBar>
          <QLogo />
          <TitleText>Joined layer — Features Total: 81318, Filtered: 81318, Selected: 0</TitleText>
          <WinBtns>
            <svg width="12" height="12" viewBox="0 0 12 12"><path d="M1.5 5.5H11.5" stroke="#000" /></svg>
            <svg width="12" height="12" viewBox="0 0 12 12" fill="none"><rect x="1.5" y="1.5" width="9" height="9" stroke="#000" /></svg>
            <svg width="12" height="12" viewBox="0 0 12 12"><path d="M1 1L11 11M11 1L1 11" stroke="#000" strokeWidth="1.1" /></svg>
          </WinBtns>
        </TitleBar>
        <ToolRow $h={31} $left={3}>
          {DIALOG_TOOLS.map((t, i) =>
            t === "sep" ? <Sep key={i} /> : Array.isArray(t) ? <Tool key={i} $off>{t[0]}</Tool> : <Tool key={i}>{t as React.ReactNode}</Tool>
          )}
        </ToolRow>
        <GridBox>
          <Table>
            <HeadCell $first />
            {COLS.map((c) => <HeadCell key={c}>{c}</HeadCell>)}
            {ROWS.map((r, i) => <Row key={r[0]} r={r} i={i} />)}
            <RowHead />
            {COLS.map((c) => <Cell key={c} />)}
          </Table>
          <Filler />
          <VBar>
            <Btn $h={13}><Arrow d="u" /></Btn>
            <VThumb $top={0} $h={28} />
            <Grow />
            <BarLine />
            <Btn $h={13}><Arrow d="d" /></Btn>
          </VBar>
        </GridBox>
        <Footer>
          <ShowAll>
            <TableIcon />
            <ShowText>Show All Features</ShowText>
            <Caret>
              <svg width="6" height="4" viewBox="0 0 6 4"><path d="M0 0H6L3 3Z" fill="#505050" /></svg>
            </Caret>
          </ShowAll>
          <FootRight>
            <FormIcon />
            <Pressed><TableIcon /></Pressed>
          </FootRight>
        </Footer>
      </Win>
    </Shell>
  );
}
